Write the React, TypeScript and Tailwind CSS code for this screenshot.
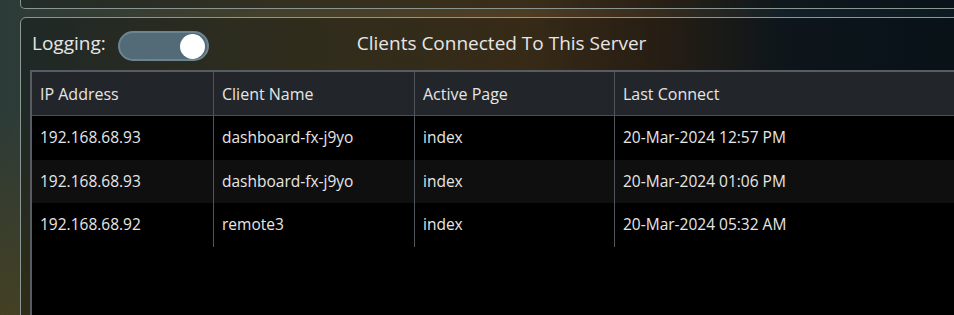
import React from 'react'

const rows = [
  { ip: '192.168.68.93', name: 'dashboard-fx-j9yo', page: 'index', last: '20-Mar-2024 12:57 PM' },
  { ip: '192.168.68.93', name: 'dashboard-fx-j9yo', page: 'index', last: '20-Mar-2024 01:06 PM' },
  { ip: '192.168.68.92', name: 'remote3', page: 'index', last: '20-Mar-2024 05:32 AM' },
]

const cols = ['w-[182px]', 'w-[201px]', 'w-[200px]', 'flex-1']

export default function App() {
  return (
    <div className="w-[954px] h-[315px] overflow-hidden bg-[linear-gradient(to_right,#2c3b38_0%,#45402a_30%,#4f3d22_55%,#3a2c1c_68%,#142027_82%,#0c1a22_100%)] font-['Open_Sans',sans-serif] text-[#e6e6e6]">
      <div className="h-full bg-[linear-gradient(to_bottom,transparent_35%,rgba(95,70,10,0.45)_100%)] pl-[20px]">
        {/* previous panel, only its bottom edge is visible */}
        <div className="w-[1000px] h-[9px] border-x border-b border-[#8a9694] rounded-b-[5px] bg-black/25" />

        {/* clients panel */}
        <div className="w-[1000px] h-[400px] mt-[8px] border border-[#8a9694] rounded-[6px] bg-black/30 pl-[9px]">
          <div className="flex items-center h-[52px]">
            <span className="text-[19px] ml-[2px] -mt-[1px]">Logging:</span>
            <div className="ml-[12px] mt-[4px] w-[91px] h-[30px] rounded-full bg-[#536a77] border-2 border-[#6c8591] flex items-center justify-end pr-[2px]">
              <div className="w-[25px] h-[25px] rounded-full bg-white" />
            </div>
            <span className="ml-[148px] text-[19px] -mt-[1px]">Clients Connected To This Server</span>
          </div>

          <div className="h-[400px] bg-black border-l-2 border-t-2 border-[#575c62]">
            <div className="flex h-[44px] bg-[#22252a] border-b border-[#4b5057] text-[16px]">
              {['IP Address', 'Client Name', 'Active Page', 'Last Connect'].map((h, i) => (
                <div
                  key={h}
                  className={`${cols[i]} flex items-center pl-[8px] ${i < 3 ? 'border-r border-[#50555c]' : ''}`}
                >
                  {h}
                </div>
              ))}
            </div>
            {rows.map((r, ri) => (
              <div key={ri} className={`flex h-[43.5px] text-[15.5px] ${ri === 1 ? 'bg-[#0f0f0f]' : 'bg-black'}`}>
                {[r.ip, r.name, r.page, r.last].map((c, i) => (
                  <div
                    key={i}
                    className={`${cols[i]} flex items-center pl-[8px] ${i < 3 ? 'border-r border-[#50555c]' : ''}`}
                  >
                    {c}
                  </div>
                ))}
              </div>
            ))}
          </div>
        </div>
      </div>
    </div>
  )
}
